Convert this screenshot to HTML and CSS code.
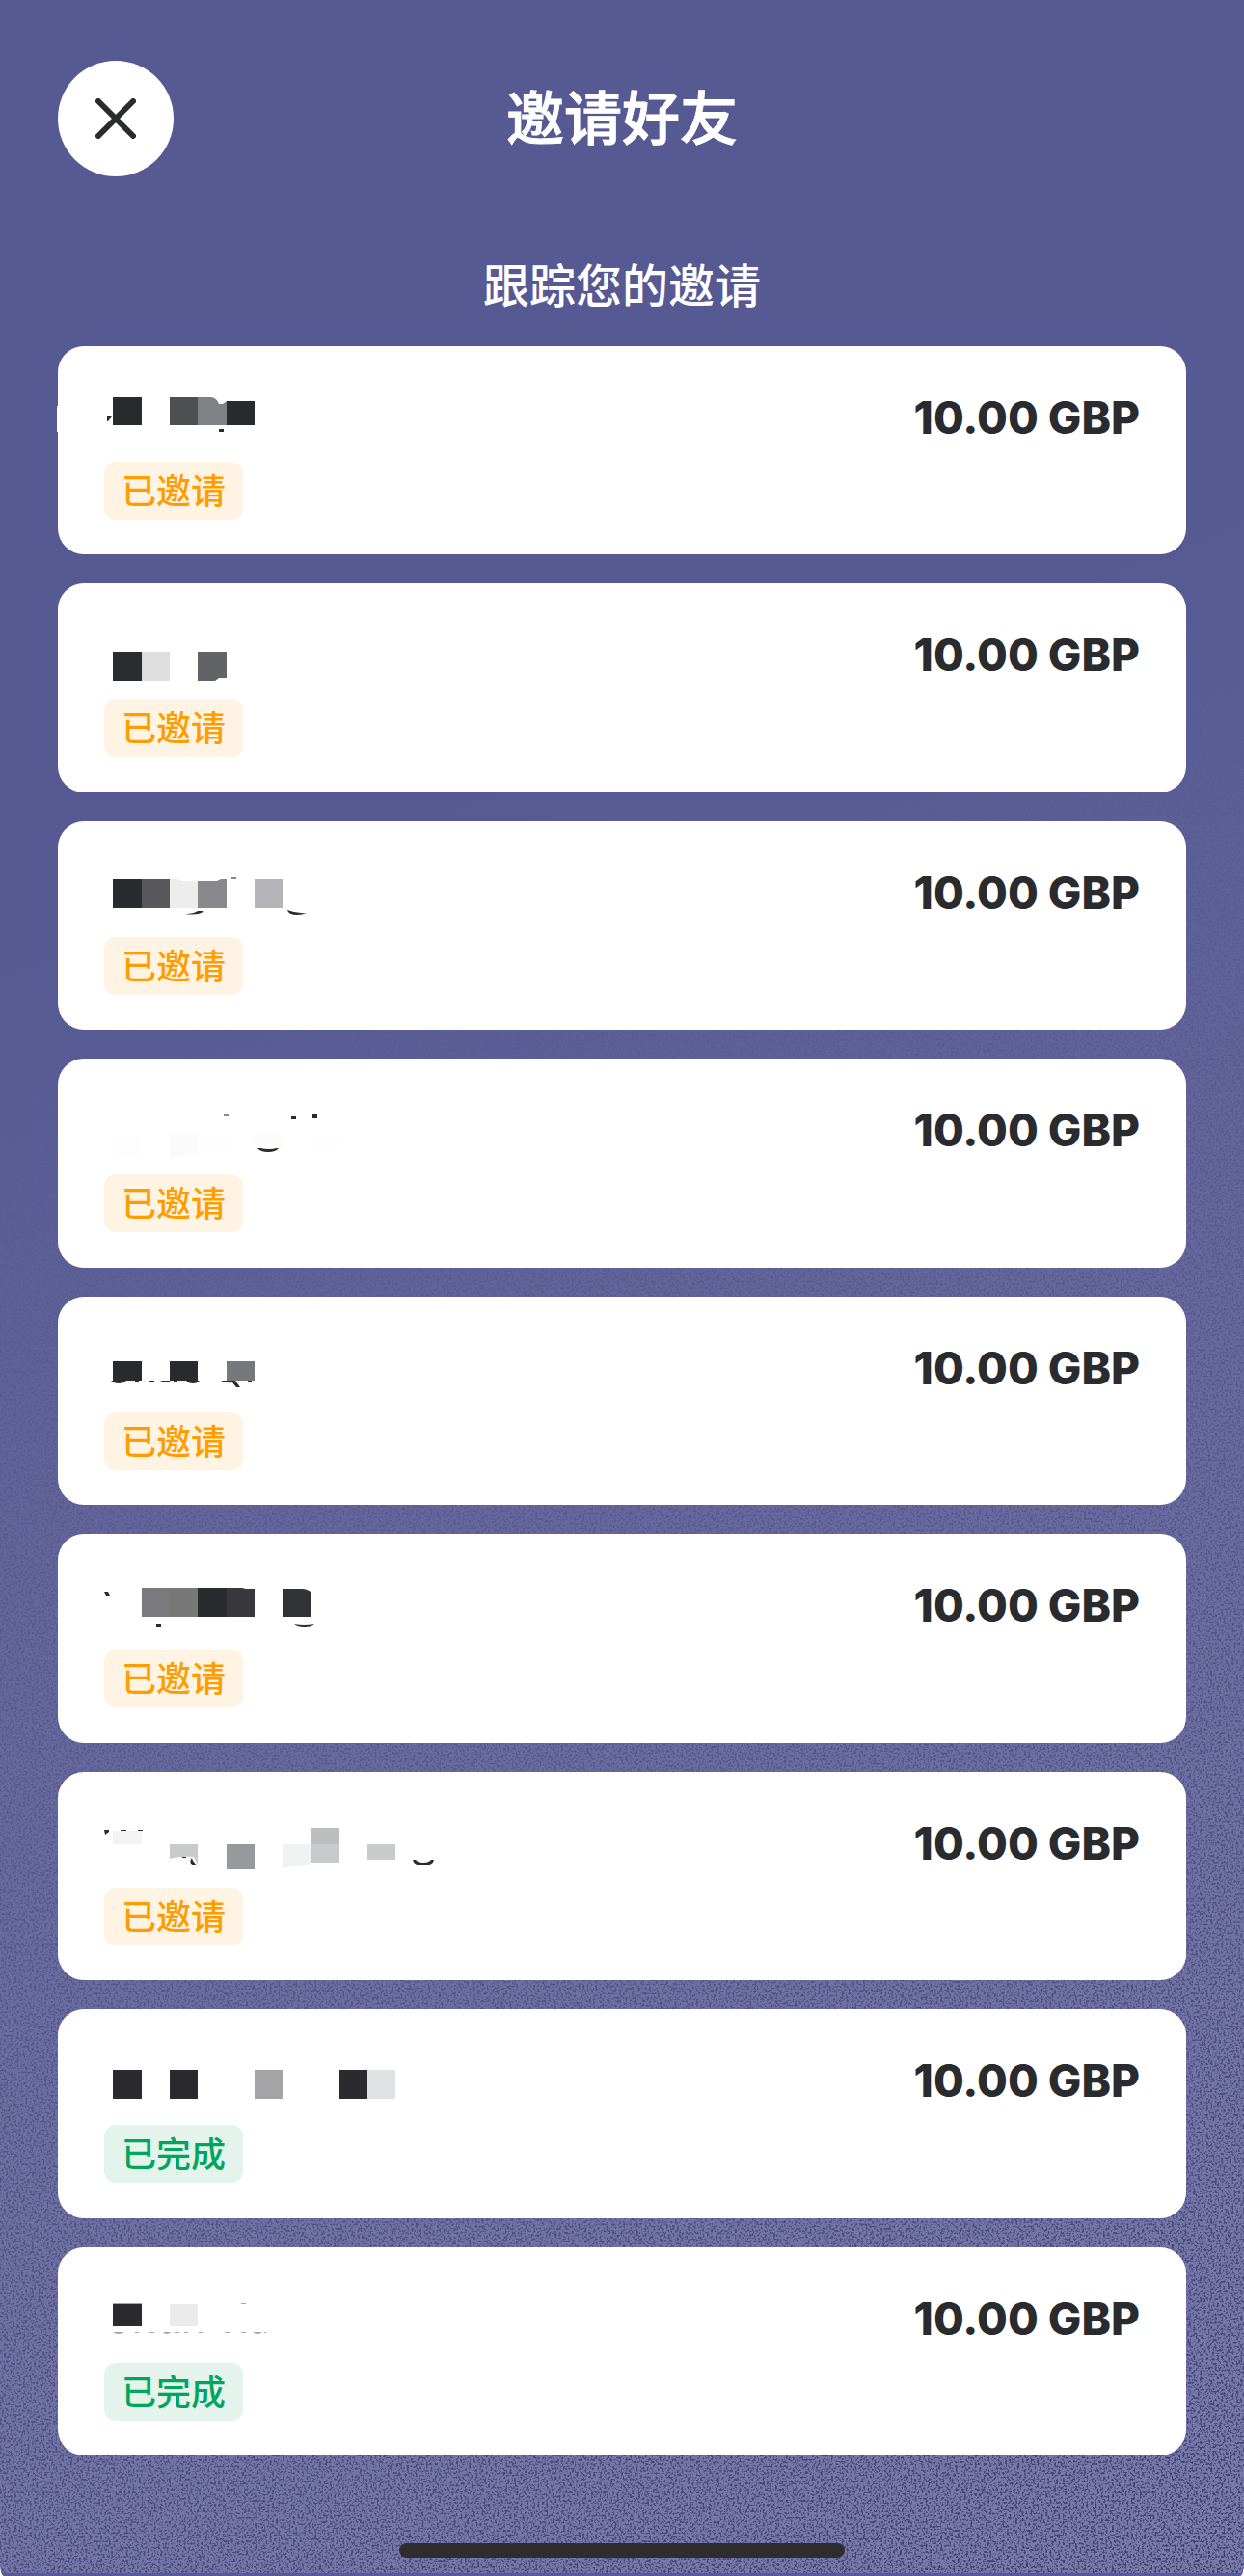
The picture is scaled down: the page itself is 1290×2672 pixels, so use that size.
FILE: index.html
```html
<!DOCTYPE html>
<html lang="zh-CN">
<head>
<meta charset="utf-8">
<meta name="viewport" content="width=device-width, initial-scale=1">
<title>邀请好友</title>
<link rel="stylesheet" href="styles.css">
</head>
<body>
<div class="screen">
  <svg class="grain" aria-hidden="true">
    <filter id="speckle" x="0" y="0" width="100%" height="100%" color-interpolation-filters="sRGB">
      <feTurbulence type="fractalNoise" baseFrequency="0.45" numOctaves="2" seed="4"/>
      <feColorMatrix values="0 0 0 0 0.25  0 0 0 0 0.25  0 0 0 0 0.44  6 0 0 0 -2.9"/>
    </filter>
    <rect width="100%" height="100%" filter="url(#speckle)"/>
  </svg>

  <header class="header">
    <button class="close" type="button" aria-label="关闭">
      <svg class="close-icon" viewBox="0 0 42 42" aria-hidden="true"><path d="M3 3 39 39M39 3 3 39"/></svg>
    </button>
    <h1 class="title">邀请好友</h1>
  </header>

  <main class="content">
    <h2 class="subtitle">跟踪您的邀请</h2>
    <ul class="list">
      <li class="card">
        <div class="person">
          <svg class="name" viewBox="0 0 400 60" aria-hidden="true">
            <path fill="#fff" d="M-49 17h1v27h-1z"/>
            <path fill="#2a2b2f" d="M9 8h30v29H9zM127 12h29v25h-29zM3 28h5l-4 5H3zM119 41h5v3h-5z"/>
            <path fill="#4e4f51" d="M68 8h29v29H68z"/>
            <path fill="#808184" d="M97 8h14q6 1 8 7h4l4-3v25H97z"/>
          </svg>
          <span class="badge">已邀请</span>
        </div>
        <span class="amount">10.00 GBP</span>
      </li>
      <li class="card">
        <div class="person">
          <svg class="name" viewBox="0 0 400 60" aria-hidden="true">
            <path fill="#2b2c30" d="M9 26h30v30H9z"/>
            <path fill="#dedede" d="M39 26h29v30H39z"/>
            <path fill="#626366" d="M97 26h30v27h-8l-4 3H97z"/>
          </svg>
          <span class="badge">已邀请</span>
        </div>
        <span class="amount">10.00 GBP</span>
      </li>
      <li class="card">
        <div class="person">
          <svg class="name" viewBox="0 0 400 60" aria-hidden="true">
            <path fill="#2a2b2f" d="M9 15h30v30H9zM84 51q9 0 13-3h7q-6 5-20 3zM190 47q10 4 20 3-4 2-10 2-9 0-10-5z"/>
            <path fill="#58575b" d="M39 15h29v30H39z"/>
            <path fill="#ededed" d="M68 15h8l5 2h16v28H68z"/>
            <path fill="#89888c" d="M97 17h20l4-2h6v30H97zM132 13h5v2h-5z"/>
            <path fill="#b5b4b9" d="M156 15h29v30h-29z"/>
          </svg>
          <span class="badge">已邀请</span>
        </div>
        <span class="amount">10.00 GBP</span>
      </li>
      <li class="card">
        <div class="person">
          <svg class="name" viewBox="0 0 400 60" aria-hidden="true">
            <path fill="#fefefe" d="M9 34h30v23H9zM97 34h30v17H97zM215 34h29v14h-29z"/>
            <path fill="#fafafa" d="M68 34h29v20l-18 1-7 2h-4z"/>
            <path fill="#fcfcfb" d="M156 34h29v14h-29z"/>
            <path fill="#89898c" d="M124 13h5v2h-5z"/>
            <path fill="#2a2b2f" d="M194 15h5v3h-5zM216 13h5v4h-5zM159 48h3q9 2 17 0h2q-3 4-11 4t-11-4z"/>
          </svg>
          <span class="badge">已邀请</span>
        </div>
        <span class="amount">10.00 GBP</span>
      </li>
      <li class="card">
        <div class="person">
          <svg class="name" viewBox="0 0 400 60" aria-hidden="true">
            <path fill="#2a2b2f" d="M9 22h30v20H9zM68 22h29v20H68zM7 42h16q-3 3-8 3t-8-3zM32 42h4v2h-4zM47 42h5v2h-5zM58 42h11q-2 2-5 2t-6-2zM72 42h4v2h-4zM85 42h14q-2 3-7 3t-7-3zM121 42h15l5 7h-4l-4-5q-8 1-12-2zM149 42h4v2h-4z"/>
            <path fill="#77787b" d="M127 22h29v20h-29z"/>
          </svg>
          <span class="badge">已邀请</span>
        </div>
        <span class="amount">10.00 GBP</span>
      </li>
      <li class="card">
        <div class="person">
          <svg class="name" viewBox="0 0 400 60" aria-hidden="true">
            <path fill="#7a797e" d="M39 11h29v30H39z"/>
            <path fill="#787878" d="M68 11h29v30H68z"/>
            <path fill="#2a2b2f" d="M97 11h30v30H97zM0 15h4l2 4H2zM54 49h5v3h-5zM197 49q10 2 21 0-3 3-10 3-8 0-11-3z"/>
            <path fill="#39393d" d="M127 11h16l4 1h9v29h-29z"/>
            <path fill="#323337" d="M185 12h20q6 0 10 4v25h-30z"/>
          </svg>
          <span class="badge">已邀请</span>
        </div>
        <span class="amount">10.00 GBP</span>
      </li>
      <li class="card">
        <div class="person">
          <svg class="name" viewBox="0 0 400 60" aria-hidden="true">
            <path fill="#f3f3f3" d="M9 16h30v14H9z"/>
            <path fill="#c9cacc" d="M68 30h29v21l-4-8q-15-1-25 2zM273 30h29v16h-29zM215 30h29v19h-29z"/>
            <path fill="#98999d" d="M127 30h29v26h-29z"/>
            <path fill="#f0f1f3" d="M185 30h30v20q-6 3-22 3l-8 2z"/>
            <path fill="#bdbfbf" d="M215 13h29v17h-29z"/>
            <path fill="#2a2b2f" d="M0 15h5v2l-4 3zM17 15h6v1h-6zM35 15h5v1h-5zM81 43h4v1h-4zM91 44q-5 7 5 8l-4-5zM320 46h3q2 3 8 3t8-3h3q-1 6-11 6t-11-6z"/>
          </svg>
          <span class="badge">已邀请</span>
        </div>
        <span class="amount">10.00 GBP</span>
      </li>
      <li class="card">
        <div class="person">
          <svg class="name" viewBox="0 0 400 60" aria-hidden="true">
            <path fill="#2b2a2f" d="M9 18h30v30H9zM68 18h29v30H68zM244 18h29v30h-29z"/>
            <path fill="#a4a4a7" d="M156 18h29v30h-29z"/>
            <path fill="#e1e2e4" d="M273 18h29v30h-29z"/>
          </svg>
          <span class="badge badge-done">已完成</span>
        </div>
        <span class="amount">10.00 GBP</span>
      </li>
      <li class="card">
        <div class="person">
          <svg class="name" viewBox="0 0 400 60" aria-hidden="true">
            <path fill="#2b2a2f" d="M9 14h30v23H9z"/>
            <path fill="#ebebeb" d="M68 14h29v23H68z"/>
            <path fill="#a5a5a7" d="M9 13h30v1H9zM142 13h5v1h-5zM9 43h12q-2 2-6 2t-6-2zM32 43h4v1h-4zM47 43h5v1h-5zM61 43h8q-1 2-4 2t-4-2zM73 43h5v1h-5zM83 43h4v1h-4zM98 43h5v1h-5zM125 43h5v1h-5zM142 43h5v1h-5zM154 43h10q-2 2-5 2t-5-2zM166 43h2v1h-2z"/>
          </svg>
          <span class="badge badge-done">已完成</span>
        </div>
        <span class="amount">10.00 GBP</span>
      </li>
    </ul>
  </main>

  <div class="home-bar"></div>
</div>
</body>
</html>
```
FILE: styles.css
```css
* {
  box-sizing: border-box;
}

body {
  margin: 0;
  background: #fff;
  color: #2a2b2f;
  font-family: Inter, "Noto Sans CJK SC", sans-serif;
}

.screen {
  position: relative;
  display: flex;
  flex-direction: column;
  min-height: 100vh;
  padding: 63px 60px 16px;
  overflow: hidden;
  border-bottom: 3px solid #5a5a96;
  border-radius: 0 0 4px 4px / 0 0 14px 14px;
  background: linear-gradient(160deg, #575993 32%, #686a9f 60%, #7375a8 83%, #7b7bac 100%);
}

/* Speckled texture that fades in towards the bottom right corner */
.grain {
  position: absolute;
  inset: 0;
  width: 100%;
  height: 100%;
  -webkit-mask-image: linear-gradient(160deg, transparent 35%, rgba(0, 0, 0, 0.4) 60%, #000 100%);
  mask-image: linear-gradient(160deg, transparent 35%, rgba(0, 0, 0, 0.4) 60%, #000 100%);
}

.header,
.content,
.home-bar {
  position: relative;
}

.header {
  display: grid;
  grid-template-columns: 120px 1fr 120px;
  align-items: center;
}

.close {
  display: flex;
  align-items: center;
  justify-content: center;
  width: 120px;
  height: 120px;
  padding: 0;
  border: 0;
  border-radius: 50%;
  background: #fff;
}

.close-icon {
  width: 42px;
  height: 42px;
  fill: none;
  stroke: #2a2b2f;
  stroke-width: 6;
  stroke-linecap: round;
}

.title {
  margin: 0;
  color: #fff;
  font-size: 60px;
  font-weight: 500;
  line-height: 120px;
  text-align: center;
  -webkit-text-stroke: 1px currentColor;
}

.subtitle {
  margin: 84px 0 32px;
  color: #fff;
  font-size: 48px;
  font-weight: 500;
  line-height: 60px;
  text-align: center;
}

.list {
  display: flex;
  flex-direction: column;
  gap: 30px;
  margin: 0;
  padding: 0;
  list-style: none;
}

.card {
  display: flex;
  justify-content: space-between;
  align-items: flex-start;
  padding: 45px 48px 36px;
  border-radius: 27px;
  background: #fff;
}

.card:nth-child(even) {
  padding-bottom: 37px;
}

.person {
  display: flex;
  flex-direction: column;
  align-items: flex-start;
  gap: 15px;
}

.name {
  width: 400px;
  height: 60px;
  overflow: visible;
  shape-rendering: geometricPrecision;
}

.badge {
  padding: 2px 18px 0;
  border-radius: 12px;
  background: #fff4e3;
  color: #ff9d00;
  font-size: 36px;
  font-weight: 500;
  line-height: 58px;
}

.badge-done {
  background: #e4f3eb;
  color: #00a65e;
}

.amount {
  font-size: 46px;
  font-weight: 800;
  line-height: 58px;
  white-space: nowrap;
}

.home-bar {
  align-self: center;
  width: 462px;
  max-width: 60%;
  height: 15px;
  margin-top: 91px;
  border-radius: 8px;
  background: #2e2e2e;
}
```
